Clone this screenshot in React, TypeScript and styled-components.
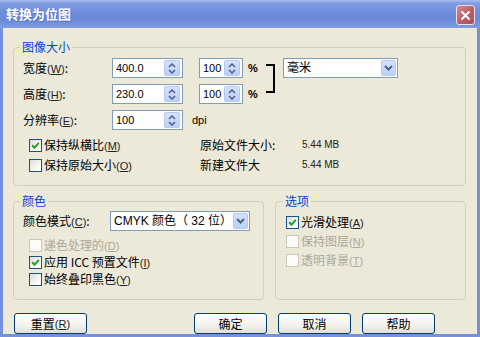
import React from 'react';
import styled, { createGlobalStyle } from 'styled-components';

const GlobalStyle = createGlobalStyle`
  html, body {
    margin: 0;
    padding: 0;
    background: #ece9d8;
  }
  body {
    font-family: "Liberation Sans", "Noto Sans CJK SC", sans-serif;
    font-size: 12px;
    color: #000;
  }
`;

const CJK = `"Noto Sans CJK SC", sans-serif`;
const LATIN = `"Liberation Sans", sans-serif`;

const Window = styled.div`
  width: 480px;
  height: 337px;
  display: flex;
  flex-direction: column;
  background: #7591dc;
  overflow: hidden;
`;

const TitleBar = styled.div`
  height: 28px;
  flex: none;
  display: flex;
  align-items: center;
  justify-content: space-between;
  padding: 0 5px 0 6px;
  background: linear-gradient(
    to bottom,
    #a9bdf0 0%,
    #7f9be2 12%,
    #6d8cdb 45%,
    #6b8adb 72%,
    #7e9ce4 100%
  );
`;

const Title = styled.span`
  color: #fff;
  font: bold 13px/16px ${CJK};
  text-shadow: 1px 1px 0 rgba(40, 60, 140, 0.35);
`;

const CloseButton = styled.div`
  width: 19px;
  height: 20px;
  margin-top: 2px;
  box-sizing: border-box;
  border: 1px solid #f0dce2;
  border-radius: 3px;
  background: linear-gradient(135deg, #d48a92, #b85e69 55%, #a8515c);
  display: flex;
  align-items: center;
  justify-content: center;
`;

const Body = styled.div`
  flex: 1;
  margin: 0 3px 3px;
  background: #ece9d8;
  padding: 12px 11px 0 10px;
  display: flex;
  flex-direction: column;
`;

const Group = styled.fieldset<{ $pad: string; $w?: number }>`
  margin: 0;
  min-width: 0;
  border: 1px solid #d0d0bf;
  border-radius: 4px;
  padding: ${(p) => p.$pad};
  ${(p) => (p.$w ? `width: ${p.$w}px; flex: none; box-sizing: border-box;` : 'flex: 1;')}
`;

const Legend = styled.legend`
  margin-left: -3px;
  padding: 0 2px;
  color: #0046d5;
  font: 12px/14px ${CJK};
`;

const SizeGrid = styled.div`
  display: grid;
  grid-template-columns: 89px 71px 16px 44px 23px 17px 115px;
  grid-template-rows: repeat(3, 20px);
  row-gap: 6px;
  align-items: center;
  grid-template-areas:
    'wl wv . wp wpc br unit'
    'hl hv . hp hpc br .'
    'rl rv dpi dpi dpi . .';
`;

const FieldLabel = styled.span<{ $area?: string }>`
  ${(p) => (p.$area ? `grid-area: ${p.$area};` : '')}
  font: 12px/14px ${CJK};
  white-space: nowrap;
`;

const Key = styled.span`
  font: 11px/14px ${LATIN};
  color: #222;
  & u {
    text-decoration-thickness: 1px;
    text-underline-offset: 1px;
  }
`;

const SpinBox = styled.div<{ $area: string }>`
  grid-area: ${(p) => p.$area};
  height: 20px;
  box-sizing: border-box;
  border: 1px solid #7f9db9;
  background: #fff;
  display: flex;
  align-items: center;
  padding: 0 2px 0 3px;
`;

const FieldText = styled.span`
  flex: 1;
  font: 11px/14px ${LATIN};
  white-space: nowrap;
`;

const ArrowButton = styled.div<{ $w: number }>`
  width: ${(p) => p.$w}px;
  height: 16px;
  flex: none;
  box-sizing: border-box;
  border: 1px solid #b7c8f0;
  border-radius: 2px;
  background: linear-gradient(#d6e1fd, #bccff9);
  display: flex;
  align-items: center;
  justify-content: center;
`;

const Pct = styled.span`
  grid-area: ${(p: { $area: string }) => p.$area};
  padding-left: 5px;
  font: bold 11px/14px ${LATIN};
`;

const Unit = styled.span`
  grid-area: dpi;
  padding-left: 9px;
  font: 11px/14px ${LATIN};
`;

const Bracket = styled.div`
  grid-area: br;
  align-self: start;
  margin-top: 6px;
  width: 7px;
  height: 25px;
  border: 2px solid #000;
  border-left: none;
`;

const Combo = styled.div<{ $w: number; $area?: string }>`
  ${(p) => (p.$area ? `grid-area: ${p.$area};` : '')}
  width: ${(p) => p.$w}px;
  height: 20px;
  box-sizing: border-box;
  border: 1px solid #7f9db9;
  background: #fff;
  display: flex;
  align-items: center;
  padding: 0 1px 0 3px;
`;

const ComboText = styled.span`
  flex: 1;
  font: 12px/14px "Liberation Sans", "Noto Sans CJK SC", sans-serif;
  white-space: nowrap;
`;

const CheckArea = styled.div`
  display: grid;
  grid-template-columns: 171px 102px auto;
  grid-auto-rows: 20px;
  align-items: center;
  margin: 5px 0 0 6px;
`;

const InfoLabel = styled.span`
  font: 12px/14px ${CJK};
`;

const InfoValue = styled.span`
  font: 10px/14px ${LATIN};
  color: #222;
`;

const LowerRow = styled.div`
  display: flex;
  gap: 11px;
  margin-top: 8px;
`;

const ModeRow = styled.div`
  display: flex;
  align-items: center;
  height: 20px;
  & > span:first-child {
    width: 87px;
  }
`;

const CheckList = styled.div<{ $row: number; $indent: number; $top: number }>`
  display: grid;
  grid-auto-rows: ${(p) => p.$row}px;
  align-items: center;
  margin: ${(p) => p.$top}px 0 0 ${(p) => p.$indent}px;
`;

const CheckRow = styled.label<{ $disabled?: boolean }>`
  display: flex;
  align-items: center;
  gap: 2px;
  font: 12px/14px ${CJK};
  color: ${(p) => (p.$disabled ? '#aca899' : '#000')};
  white-space: nowrap;
  & ${Key} {
    color: ${(p) => (p.$disabled ? '#aca899' : '#222')};
  }
`;

const Box = styled.span<{ $disabled?: boolean }>`
  width: 13px;
  height: 13px;
  flex: none;
  box-sizing: border-box;
  border: 1px solid ${(p) => (p.$disabled ? '#cac8bb' : '#1c5180')};
  background: ${(p) =>
    p.$disabled ? '#fbfbf9' : 'linear-gradient(135deg, #dcdbd5, #ffffff 80%)'};
  display: flex;
  align-items: center;
  justify-content: center;
`;

const ButtonRow = styled.div`
  display: flex;
  margin-top: 13px;
  padding: 0 31px 0 1px;
`;

const ButtonGroup = styled.div`
  display: flex;
  gap: 11px;
  margin-left: auto;
`;

const Button = styled.div`
  width: 73px;
  height: 21px;
  box-sizing: border-box;
  border: 1px solid #003c74;
  border-radius: 3px;
  background: linear-gradient(#ffffff, #f3f2ec 60%, #e2ded3);
  display: flex;
  align-items: center;
  justify-content: center;
  font: 12px/14px ${CJK};
`;

function SpinArrows() {
  return (
    <svg width="8" height="11" viewBox="0 0 8 11">
      <path d="M1 4 L4 1 L7 4 M1 7 L4 10 L7 7" fill="none" stroke="#4d6185" strokeWidth="1.5" />
    </svg>
  );
}

function DownArrow() {
  return (
    <svg width="9" height="6" viewBox="0 0 9 6">
      <path d="M1 1 L4.5 4.5 L8 1" fill="none" stroke="#4d6185" strokeWidth="2" />
    </svg>
  );
}

function Spin({ area, value }: { area: string; value: string }) {
  return (
    <SpinBox $area={area}>
      <FieldText>{value}</FieldText>
      <ArrowButton $w={16}>
        <SpinArrows />
      </ArrowButton>
    </SpinBox>
  );
}

function Mn({ k }: { k: string }) {
  return (
    <Key>
      (<u>{k}</u>)
    </Key>
  );
}

function Check({
  label,
  k,
  checked,
  disabled,
}: {
  label: string;
  k: string;
  checked?: boolean;
  disabled?: boolean;
}) {
  return (
    <CheckRow $disabled={disabled}>
      <Box $disabled={disabled}>
        {checked && (
          <svg width="9" height="9" viewBox="0 0 9 9">
            <path d="M1.2 4.3 L3.5 6.8 L7.8 1.8" fill="none" stroke="#21a121" strokeWidth="2" />
          </svg>
        )}
      </Box>
      <span>
        {label}
        <Mn k={k} />
      </span>
    </CheckRow>
  );
}

export default function App() {
  return (
    <Window>
      <GlobalStyle />
      <TitleBar>
        <Title>转换为位图</Title>
        <CloseButton>
          <svg width="11" height="11" viewBox="0 0 11 11">
            <path d="M1.5 1.5 L9.5 9.5 M9.5 1.5 L1.5 9.5" stroke="#fff" strokeWidth="2" />
          </svg>
        </CloseButton>
      </TitleBar>
      <Body>
        <Group $pad="4px 9px 2px 9px">
          <Legend>图像大小</Legend>
          <SizeGrid>
            <FieldLabel $area="wl">
              宽度<Mn k="W" />:
            </FieldLabel>
            <Spin area="wv" value="400.0" />
            <Spin area="wp" value="100" />
            <Pct $area="wpc">%</Pct>
            <Bracket />
            <Combo $w={115} $area="unit">
              <ComboText>毫米</ComboText>
              <ArrowButton $w={15}>
                <DownArrow />
              </ArrowButton>
            </Combo>
            <FieldLabel $area="hl">
              高度<Mn k="H" />:
            </FieldLabel>
            <Spin area="hv" value="230.0" />
            <Spin area="hp" value="100" />
            <Pct $area="hpc">%</Pct>
            <FieldLabel $area="rl">
              分辨率<Mn k="E" />:
            </FieldLabel>
            <Spin area="rv" value="100" />
            <Unit>dpi</Unit>
          </SizeGrid>
          <CheckArea>
            <Check label="保持纵横比" k="M" checked />
            <InfoLabel>原始文件大小:</InfoLabel>
            <InfoValue>5.44 MB</InfoValue>
            <Check label="保持原始大小" k="O" />
            <InfoLabel>新建文件大</InfoLabel>
            <InfoValue>5.44 MB</InfoValue>
          </CheckArea>
        </Group>
        <LowerRow>
          <Group $pad="3px 9px 11px 9px" $w={251}>
            <Legend>颜色</Legend>
            <ModeRow>
              <FieldLabel>
                颜色模式<Mn k="C" />:
              </FieldLabel>
              <Combo $w={140}>
                <ComboText>CMYK 颜色（ 32 位）</ComboText>
                <ArrowButton $w={15}>
                  <DownArrow />
                </ArrowButton>
              </Combo>
            </ModeRow>
            <CheckList $row={17} $indent={6} $top={6}>
              <Check label="递色处理的" k="D" disabled />
              <Check label="应用 ICC 预置文件" k="I" checked />
              <Check label="始终叠印黑色" k="Y" />
            </CheckList>
          </Group>
          <Group $pad="5px 10px 0 10px">
            <Legend>选项</Legend>
            <CheckList $row={19} $indent={0} $top={0}>
              <Check label="光滑处理" k="A" checked />
              <Check label="保持图层" k="N" disabled />
              <Check label="透明背景" k="T" disabled />
            </CheckList>
          </Group>
        </LowerRow>
        <ButtonRow>
          <Button>
            重置<Mn k="R" />
          </Button>
          <ButtonGroup>
            <Button>确定</Button>
            <Button>取消</Button>
            <Button>帮助</Button>
          </ButtonGroup>
        </ButtonRow>
      </Body>
    </Window>
  );
}
